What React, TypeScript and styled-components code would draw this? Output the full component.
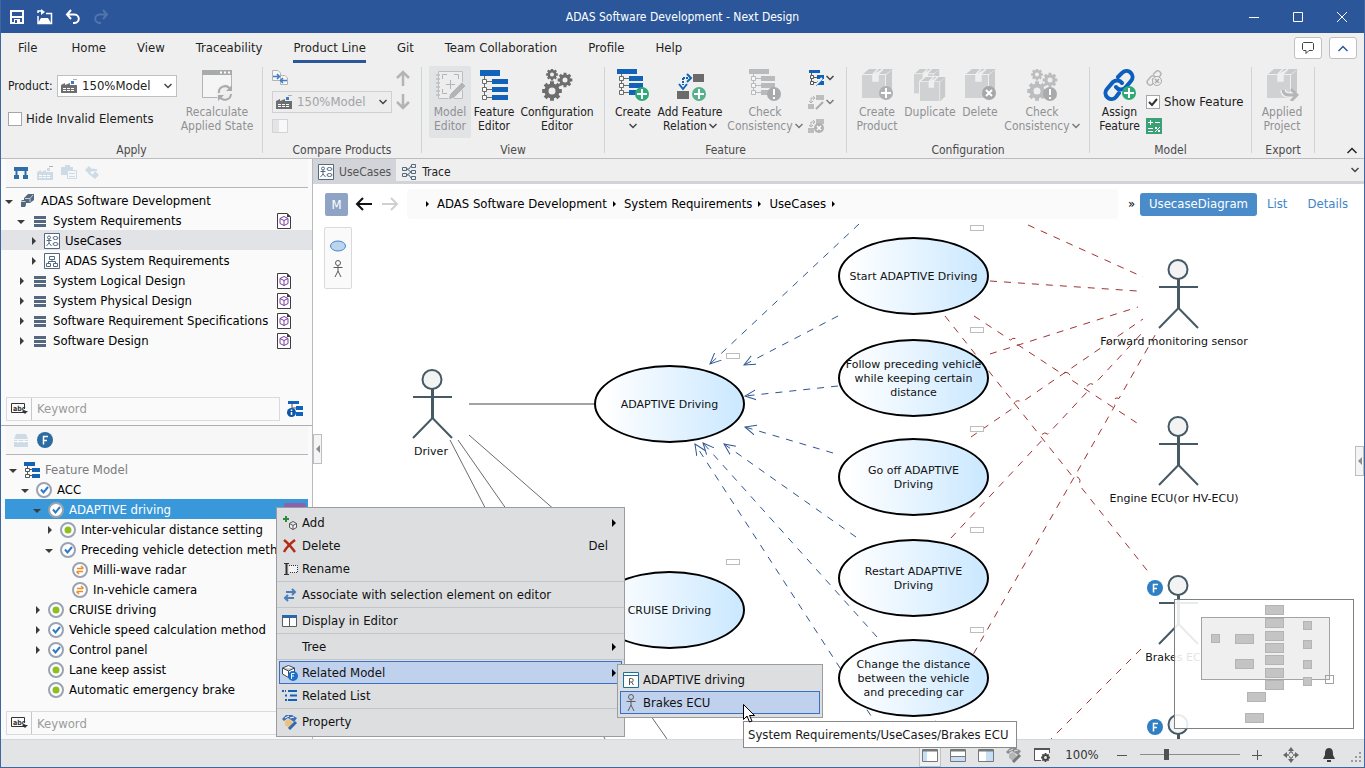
import React from "react";
import styled, { createGlobalStyle, css } from "styled-components";

const UI = `"DejaVu Sans Condensed", "DejaVu Sans", "Noto Sans", sans-serif`;
const WIDE = `"DejaVu Sans", "Noto Sans", sans-serif`;
const BLUE = "#2b579a";
const ICON_BLUE = "#1263b8";
const SLATE = "#54687f";
const GREEN = "#2fa977";

const Global = createGlobalStyle`
  *, *::before, *::after { box-sizing: border-box; }
  html, body { margin: 0; height: 100%; }
  body { font: 13px/20px ${UI}; color: #1a1a1a; background: #fff; overflow: hidden; }
  #root { height: 100%; }
  button, input, select { font: inherit; color: inherit; }
  button { background: none; border: 0; padding: 0; margin: 0; }
  svg { display: block; flex: none; }
`;

/* ---------- shell ---------- */

const Shell = styled.div`
  position: relative;
  height: 100vh;
  display: flex;
  flex-direction: column;
  border: 1px solid #41659f;
  border-top: 0;
  background: #efefef;
  overflow: hidden;
`;

const TitleBar = styled.header`
  flex: none;
  height: 33px;
  display: grid;
  grid-template-columns: 1fr auto 1fr;
  align-items: center;
  background: ${BLUE};
  color: #fff;
  font-size: 12px;
`;
const QuickTools = styled.div`
  display: flex;
  padding-left: 2px;
`;
const WindowTools = styled.div`
  display: flex;
  justify-content: flex-end;
`;
const TitleButton = styled.button<{ $w: number }>`
  width: ${(p) => p.$w}px;
  height: 32px;
  display: flex;
  align-items: center;
  justify-content: center;
`;

const TabRow = styled.nav`
  flex: none;
  height: 30px;
  display: flex;
  align-items: flex-start;
  gap: 31px;
  padding: 0 7px 0 17px;
`;
const MenuTab = styled.a<{ $active?: boolean }>`
  height: 30px;
  line-height: 30px;
  white-space: nowrap;
  color: #1f1f1f;
  text-decoration: none;
  border-bottom: 3px solid ${(p) => (p.$active ? BLUE : "transparent")};
  &:first-child { padding-right: 3px; }
`;
const TabActions = styled.div`
  display: flex;
  gap: 7px;
  margin-left: auto;
  padding-top: 4px;
`;
const SquareButton = styled.button`
  width: 28px;
  height: 22px;
  display: flex;
  align-items: center;
  justify-content: center;
  background: #fff;
  border: 1px solid #bfc0c3;
  border-radius: 3px;
`;

/* ---------- ribbon ---------- */

const Ribbon = styled.section`
  flex: none;
  height: 96px;
  display: flex;
  border-bottom: 1px solid #bcbdc1;
  font-size: 12px;
`;
const Group = styled.div<{ $w: number }>`
  flex: none;
  width: ${(p) => p.$w}px;
  padding: 3px 7px 0;
  display: flex;
  flex-direction: column;
`;
const GroupBody = styled.div<{ $gap?: number }>`
  height: 76px;
  display: flex;
  gap: ${(p) => p.$gap ?? 4}px;
`;
const GroupTitle = styled.div`
  line-height: 16px;
  text-align: center;
  color: #4b4b4b;
`;
const Divider = styled.div`
  flex: none;
  width: 1px;
  margin: 4px 0 5px;
  background: #d2d3d6;
`;
const BigButton = styled.button<{ $w: number; $off?: boolean; $pressed?: boolean }>`
  flex: none;
  width: ${(p) => p.$w}px;
  height: 72px;
  padding-top: 3px;
  display: flex;
  flex-direction: column;
  align-items: center;
  gap: 4px;
  line-height: 14px;
  white-space: nowrap;
  border-radius: 2px;
  color: ${(p) => (p.$off ? "#909194" : "#222")};
  background: ${(p) => (p.$pressed ? "#e2e3e5" : "transparent")};
`;
const LabelLine = styled.span`
  display: flex;
  align-items: center;
  justify-content: center;
  gap: 2px;
  min-height: 14px;
`;
const SmallColumn = styled.div`
  display: flex;
  flex-direction: column;
`;
const SmallButton = styled.button`
  height: 24px;
  display: flex;
  align-items: center;
  gap: 2px;
`;
const ApplyFields = styled.div`
  width: 169px;
  display: flex;
  flex-direction: column;
  gap: 10px;
  padding-top: 9px;
  font-size: 13px;
`;
const FieldLabel = styled.label`
  display: flex;
  align-items: center;
  justify-content: space-between;
  font-size: 12px;
  white-space: nowrap;
`;
const SelectBox = styled.span<{ $off?: boolean }>`
  width: 120px;
  height: 22px;
  display: grid;
  grid-template-columns: 22px 1fr 16px;
  align-items: center;
  justify-items: center;
  border: 1px solid ${(p) => (p.$off ? "#cfd0d3" : "#bfc0c3")};
  background: ${(p) => (p.$off ? "#ededee" : "#fff")};
  font-size: 13px;
  select {
    grid-row: 1;
    grid-column: 1 / 4;
    width: 118px;
    height: 20px;
    appearance: none;
    border: 0;
    padding: 0 0 0 24px;
    background: transparent;
    color: ${(p) => (p.$off ? "#a2a3a6" : "#222")};
    opacity: 1;
  }
  svg { grid-row: 1; pointer-events: none; }
  svg:first-of-type { grid-column: 1; }
  svg:last-of-type { grid-column: 3; }
`;
const CheckLabel = styled.label`
  height: 24px;
  display: flex;
  align-items: center;
  gap: 4px;
  font-size: 13px;
  white-space: nowrap;
  input {
    appearance: none;
    flex: none;
    width: 14px;
    height: 14px;
    margin: 0;
    border: 1px solid #a5a6aa;
    background: #fff;
  }
  input:checked {
    background: #fff url("data:image/svg+xml,%3Csvg xmlns='http://www.w3.org/2000/svg' viewBox='0 0 12 12'%3E%3Cpath d='M2 6l3 3 5-6' fill='none' stroke='%23333' stroke-width='2'/%3E%3C/svg%3E") center / 12px no-repeat;
  }
`;
const CompareBody = styled.div`
  display: grid;
  grid-template-columns: 120px 20px;
  grid-template-rows: 24px 24px 24px;
  align-items: center;
  column-gap: 3px;
  padding-left: 2px;
`;
const RibbonToggle = styled.button`
  align-self: flex-end;
  margin: 0 7px 2px auto;
  height: 12px;
  display: flex;
  align-items: center;
`;

/* ---------- main area ---------- */

const Main = styled.main`
  flex: 1;
  min-height: 0;
  display: flex;
`;
const Side = styled.aside`
  flex: none;
  width: 312px;
  display: flex;
  flex-direction: column;
  background: #fafafa;
  border-right: 1px solid #b9bac0;
  white-space: nowrap;
  color: #000;
`;
const TopPane = styled.section`
  flex: 0 0 46%;
  display: flex;
  flex-direction: column;
  border-bottom: 1px solid #adaeb0;
`;
const BottomPane = styled.section`
  flex: 1;
  min-height: 0;
  display: flex;
  flex-direction: column;
`;
const PaneTools = styled.div`
  flex: none;
  height: 29px;
  margin: 0 4px 0 5px;
  display: flex;
  align-items: center;
  gap: 8px;
  padding: 0 8px;
  border-bottom: 1px solid #b5b6b8;
  background: #f7f7f7;
`;
const Tree = styled.ul<{ $inset?: boolean }>`
  flex: 1;
  min-height: 0;
  overflow: hidden;
  list-style: none;
  margin: ${(p) => (p.$inset ? "4px 4px 0" : "2px 0 0")};
  padding: 0;
`;
const TreeRow = styled.li<{ $depth: number; $tone?: "grey" | "blue"; $muted?: boolean }>`
  height: 20px;
  display: flex;
  align-items: center;
  padding: 2px 21px 0 ${(p) => 2 + p.$depth * 12}px;
  color: ${(p) => (p.$muted ? "#7b7c7e" : "#000")};
  ${(p) => p.$tone === "grey" && css`background: #e2e3e7;`}
  ${(p) => p.$tone === "blue" && css`background: #3998d9; color: #fff; padding-right: 0;`}
`;
const CaretCell = styled.span`
  flex: none;
  width: 12px;
  margin-right: 5px;
  display: flex;
  justify-content: center;
`;
const IconCell = styled.span`
  flex: none;
  width: 16px;
  margin-right: 5px;
  display: flex;
  justify-content: center;
`;
const RowBadge = styled.span`
  margin-left: auto;
`;
const PurpleBadge = styled.span`
  width: 22px;
  height: 14px;
  margin: 0 2px 0 auto;
  border-radius: 2px;
  background: #8d62ab;
`;
const SearchRow = styled.div`
  flex: none;
  display: flex;
  align-items: center;
  gap: 7px;
  padding: 0 9px 4px 5px;
`;
const SearchBox = styled.label`
  flex: 1;
  height: 24px;
  display: flex;
  align-items: center;
  border: 1px solid #d9dadb;
  span {
    width: 25px;
    height: 22px;
    display: flex;
    align-items: center;
    justify-content: center;
    border-right: 1px solid #c4c9cf;
  }
  input {
    flex: 1;
    min-width: 0;
    height: 22px;
    border: 0;
    padding: 0 5px;
    background: transparent;
  }
  input::placeholder { color: #9b9b9b; opacity: 1; }
`;

/* ---------- editor ---------- */

const Editor = styled.section`
  flex: 1;
  min-width: 0;
  display: flex;
  flex-direction: column;
  background: #fff;
`;
const DocTabs = styled.div`
  flex: none;
  height: 25px;
  display: flex;
  background: #efefef;
  border-bottom: 3px solid #d3d4d9;
  font-size: 12px;
`;
const DocTab = styled.button<{ $active?: boolean }>`
  height: 25px;
  display: flex;
  align-items: center;
  gap: 5px;
  padding: 0 5px;
  background: ${(p) => (p.$active ? "#d3d4d9" : "transparent")};
  color: ${(p) => (p.$active ? "#555" : "#222")};
`;
const DocMenu = styled.button`
  margin: 0 5px 0 auto;
  display: flex;
  align-items: center;
`;
const PathRow = styled.div`
  flex: none;
  height: 40px;
  display: flex;
  align-items: center;
  padding: 0 6px 0 12px;
`;
const ModelChip = styled.span`
  width: 23px;
  height: 23px;
  line-height: 23px;
  margin-right: 7px;
  text-align: center;
  border-radius: 2px;
  color: #fff;
  background: #8fa3c4;
`;
const NavButton = styled.button`
  width: 26px;
  height: 24px;
  display: flex;
  align-items: center;
`;
const Crumbs = styled.ol`
  flex: 1;
  height: 30px;
  margin: 0 10px 0 0;
  padding: 0 0 0 13px;
  display: flex;
  align-items: center;
  list-style: none;
  border-radius: 4px;
  background: #fafafa;
  white-space: nowrap;
  li { display: flex; align-items: center; }
  svg { margin: 0 7px 0 6px; }
  a { color: #000; text-decoration: none; }
`;
const More = styled.button`
  width: 12px;
  text-align: left;
  color: #000;
`;
const ViewTab = styled.button<{ $active?: boolean }>`
  height: 23px;
  padding: 0 ${(p) => (p.$active ? 9 : 10)}px;
  border-radius: 3px;
  background: ${(p) => (p.$active ? "#4a8cca" : "transparent")};
  color: ${(p) => (p.$active ? "#fff" : "#3f84c8")};
`;

const Canvas = styled.div`
  position: relative;
  flex: 1;
  min-height: 0;
  overflow: hidden;
`;
const EdgeLayer = styled.svg`
  position: absolute;
  inset: 0;
  width: 100%;
  height: 100%;
`;
const UseCaseNode = styled.div`
  position: absolute;
  width: 151px;
  height: 78px;
  padding-top: 2px;
  display: flex;
  align-items: center;
  justify-content: center;
  text-align: center;
  white-space: pre;
  border: 2px solid #000;
  border-radius: 50%;
  background: linear-gradient(90deg, #fff 5%, #cde9ff 95%);
  font: 11px/14px ${WIDE};
  color: #111;
`;
const NodeTab = styled.div`
  position: absolute;
  width: 14px;
  height: 6px;
  border: 1px solid #bdbdbd;
  background: #fff;
`;
const ActorNode = styled.div`
  position: absolute;
  width: 160px;
  display: flex;
  flex-direction: column;
  align-items: center;
  font: 11px/14px ${WIDE};
  color: #111;
`;
const ActorLabel = styled.span<{ $long?: boolean }>`
  padding: 1px ${(p) => (p.$long ? 8 : 2)}px 0 0;
`;
const FeatureMark = styled.span`
  position: absolute;
  left: 49px;
  top: 6px;
`;
const Palette = styled.div`
  position: absolute;
  left: 11px;
  top: 3px;
  width: 28px;
  height: 62px;
  display: flex;
  flex-direction: column;
  align-items: center;
  gap: 4px;
  padding-top: 8px;
  border: 1px solid #d9dadc;
  border-radius: 2px;
  background: #fafafa;
`;
const PaneHandle = styled.button<{ $right?: boolean }>`
  position: absolute;
  top: ${(p) => (p.$right ? 222 : 210)}px;
  ${(p) => (p.$right ? "right: 0;" : "left: 0;")}
  width: 9px;
  height: 30px;
  display: flex;
  align-items: center;
  justify-content: center;
  border: 1px solid #bcbdc1;
  background: #f5f5f5;
`;
const MiniMap = styled.div`
  position: absolute;
  right: 10px;
  bottom: 10px;
  width: 180px;
  height: 130px;
  border: 1px solid #808080;
  background: rgba(255, 255, 255, 0.88);
`;

/* ---------- overlays ---------- */

const Menu = styled.div<{ $x: number; $y: number; $w: number }>`
  position: absolute;
  left: ${(p) => p.$x - 1}px;
  top: ${(p) => p.$y}px;
  width: ${(p) => p.$w}px;
  padding: 3px 2px;
  border: 1px solid #9b9c9e;
  background: #dddee0;
  color: #111;
`;
const MenuItem = styled.button<{ $hot?: boolean }>`
  width: 100%;
  height: 23px;
  display: flex;
  align-items: center;
  gap: 4px;
  padding: 0 5px 0 2px;
  text-align: left;
  white-space: nowrap;
  border: 1px solid ${(p) => (p.$hot ? "#3a6fc4" : "transparent")};
  background: ${(p) => (p.$hot ? "#c0d1ee" : "transparent")};
`;
const MenuIcon = styled.span`
  width: 16px;
  display: flex;
  justify-content: center;
`;
const MenuEnd = styled.span<{ $key?: boolean }>`
  margin-left: auto;
  padding-right: ${(p) => (p.$key ? 8 : 0)}px;
`;
const MenuRule = styled.div`
  height: 1px;
  margin: 1px -2px;
  background: #c4c5c8;
`;
const Tip = styled.div`
  position: absolute;
  left: 742px;
  top: 721px;
  height: 27px;
  padding: 0 8px 0 4px;
  line-height: 25px;
  border: 1px solid #8a8a8a;
  background: #fff;
  white-space: nowrap;
`;
const Pointer = styled.svg`
  position: absolute;
  left: 742px;
  top: 704px;
`;

/* ---------- status bar ---------- */

const StatusBar = styled.footer`
  flex: none;
  height: 28px;
  display: flex;
  align-items: center;
  justify-content: flex-end;
  padding: 2px 2px 0 0;
  border-top: 1px solid #d5d6d8;
  background: #e3e4e6;
  color: #333;
`;
const StatusButton = styled.button<{ $w?: number; $on?: boolean }>`
  width: ${(p) => p.$w ?? 28}px;
  height: 25px;
  display: flex;
  align-items: center;
  justify-content: center;
  ${(p) =>
    p.$on &&
    css`
      width: 22px;
      margin: 0 3px;
      border: 1px solid #c0c1c3;
      background: #eff0f1;
    `}
`;
const GripCell = styled.span`
  padding: 4px 0 0 4px;
`;
const ZoomValue = styled.span`
  width: 52px;
  text-align: center;
`;
const ZoomRange = styled.input`
  appearance: none;
  width: 100px;
  height: 12px;
  margin: 0 4px;
  background: linear-gradient(#8b8c8e, #8b8c8e) center / 100% 1px no-repeat;
  &::-webkit-slider-thumb {
    appearance: none;
    width: 5px;
    height: 11px;
    background: #505153;
  }
`;

/* ---------- icons ---------- */

type IcoProps = { w?: number; h?: number; children: React.ReactNode };
const Ico = ({ w = 16, h = w, children }: IcoProps) => (
  <svg width={w} height={h} viewBox={`0 0 ${w} ${h}`} fill="none" aria-hidden="true">
    {children}
  </svg>
);

const gearPath = (cx: number, cy: number, r: number, hole: number) => {
  const n = 8;
  const pts: string[] = [];
  for (let i = 0; i < n; i++) {
    const a = (i * 2 * Math.PI) / n;
    const steps: [number, number][] = [
      [-0.26, r * 0.76],
      [-0.2, r],
      [0.2, r],
      [0.26, r * 0.76],
    ];
    steps.forEach(([d, q]) => pts.push(`${(cx + q * Math.cos(a + d)).toFixed(2)} ${(cy + q * Math.sin(a + d)).toFixed(2)}`));
  }
  return `M${pts.join("L")}ZM${cx - hole} ${cy}a${hole} ${hole} 0 1 0 ${hole * 2} 0a${hole} ${hole} 0 1 0 ${-hole * 2} 0Z`;
};
const Gear = ({ x, y, r, hole, c }: { x: number; y: number; r: number; hole: number; c: string }) => (
  <path d={gearPath(x, y, r, hole)} fill={c} fillRule="evenodd" />
);

const Mark = ({ x, y, r = 7, kind, c }: { x: number; y: number; r?: number; kind: "plus" | "cross" | "bang"; c: string }) => (
  <g transform={`translate(${x} ${y})`}>
    <circle r={r} fill={c} />
    {kind === "plus" && <path d="M-5 0H5M0-5V5" stroke="#fff" strokeWidth="2" />}
    {kind === "cross" && <path d="M-3-3L3 3M3-3L-3 3" stroke="#fff" strokeWidth="2" />}
    {kind === "bang" && <path d="M0-5V1M0 3V5" stroke="#fff" strokeWidth="2" />}
  </g>
);

const FeatureTree32 = () => (
  <Ico w={32}>
    <g transform="translate(2 1)">
      <path d="M0 0H20V6H0ZM12 9H28V14H12ZM12 17H28V22H12ZM12 25H28V30H12Z" fill={ICON_BLUE} />
      <path d="M4.500 6V9.500M4.500 13.500V17.500M4.500 21.500V25.500M7 11.500H12M7 19.500H12M7 27.500H12" stroke="#6a6a6a" />
      <path d="M2.500 9.500H6.500V13.500H2.500ZM2.500 17.500H6.500V21.500H2.500ZM2.500 25.500H6.500V29.500H2.500Z" stroke="#6a6a6a" fill="#fff" />
    </g>
  </Ico>
);
const MarkedTree = ({ c, line, children }: { c: string; line: string; children: React.ReactNode }) => (
  <Ico w={34} h={32}>
    <path d="M1 0H21V5H1ZM13 7H27V12H13ZM13 14H27V19H13ZM13 21H20V26H13Z" fill={c} />
    <path d="M5.500 5V7M5.500 12V14M5.500 19V21M8 9.500H13M8 16.500H13M8 23.500H13" stroke={line} />
    <path d="M3.500 7.500H7.500V11.500H3.500ZM3.500 14.500H7.500V18.500H3.500ZM3.500 21.500H7.500V25.500H3.500Z" stroke={line} fill="#f6f6f6" />
    {children}
  </Ico>
);
const CreateFeature = () => (
  <MarkedTree c={ICON_BLUE} line="#6a6a6a"><Mark x={26} y={25} kind="plus" c={GREEN} /></MarkedTree>
);
const CheckFeature = () => (
  <MarkedTree c="#b9babb" line="#b9babb"><Mark x={26} y={25} kind="bang" c="#a9aaab" /></MarkedTree>
);
const RelationIcon = () => (
  <Ico w={34} h={32}>
    <path d="M20 5H31V13H20ZM4 22H16V30H4Z" fill="#6b6b6b" />
    <path d="M10 9V16M10 9H15" stroke={ICON_BLUE} strokeWidth="2" strokeDasharray="2 1" />
    <path d="M14 5L18 9L14 13M6 15L10 20L14 15" stroke={ICON_BLUE} strokeWidth="2" />
    <Mark x={26} y={25} kind="plus" c="#55b08c" />
  </Ico>
);
const Gears = ({ c = "#6d6d6d", bang }: { c?: string; bang?: boolean }) => (
  <Ico w={34} h={32}>
    <Gear x={12} y={5.500} r={6} hole={2} c={c} />
    <Gear x={25} y={11} r={7.500} hole={2.500} c={c} />
    <Gear x={12} y={22} r={10} hole={3.500} c={c} />
    {bang && <Mark x={25} y={25} kind="bang" c="#a9aaab" />}
  </Ico>
);
const RecalcIcon = () => (
  <Ico w={32}>
    <path d="M1.500 2.500H30.500V28.500H1.500Z" fill="#f5f5f5" stroke="#b3b4b6" />
    <path d="M1 1H31V6H1Z" fill="#a9aaac" />
    <path d="M19 3.500H21M23 3.500H25M27 3.500H29" stroke="#fff" strokeWidth="2" />
    <circle cx="24" cy="24" r="9" fill="#efefef" />
    <path d="M18 24A6 6 0 0 1 29 20M30 25A6 6 0 0 1 19 28" stroke="#a9aaac" strokeWidth="2" />
    <path d="M31 16V22H25ZM17 32V26H23Z" fill="#a9aaac" />
  </Ico>
);
const ModelEditorIcon = () => (
  <Ico w={32}>
    <path d="M4.500 2.500H28.500V29.500H4.500Z" stroke="#bdbec0" fill="#ededee" />
    <path d="M2 6H6M2 10H6M2 14H6M2 18H6M2 22H6M2 26H6" stroke="#bdbec0" strokeWidth="1.500" />
    <path d="M8.500 10V5.500H13M20 5.500H24.500V10M8.500 20V24.500H13M16.500 11V20M12 15.500H21" stroke="#b3b4b6" strokeWidth="1" />
    <path d="M14 31L16 25L28 13L32 17L20 29Z" fill="#b3b4b6" stroke="#e2e3e5" />
  </Ico>
);
const BoxArt = ({ c = "#d0d1d2", top = "#c9cacb" }: { c?: string; top?: string }) => (
  <g>
    <path d="M0 6H23V29H0Z" fill={c} />
    <path d="M1 5L7 0H31L24 5Z" fill={top} />
    <path d="M24 6L30 1V23L24 29Z" fill={top} />
    <path d="M11 5L16 0M11 5V12H16V5L21 0" stroke="#efefef" strokeWidth="1.500" fill="#efefef" />
  </g>
);
const BoxIcon = ({ kind }: { kind?: "plus" | "cross" | "export" }) => (
  <Ico w={34} h={32}>
    <g transform="translate(2 0)"><BoxArt /></g>
    {kind === "plus" && <Mark x={26} y={24} kind="plus" c="#b0b1b2" />}
    {kind === "cross" && <Mark x={26} y={24} kind="cross" c="#a6a7a8" />}
    {kind === "export" && (
      <g>
        <path d="M18 21C19 27 23 26 30 26" stroke="#efefef" strokeWidth="6" />
        <path d="M18 21C19 27 23 26 30 26M26 20L32 26L26 32" stroke="#b5b6b7" strokeWidth="3" />
      </g>
    )}
  </Ico>
);
const DuplicateIcon = () => (
  <Ico w={34} h={32}>
    <g transform="translate(1 0) scale(.84)"><BoxArt /></g>
    <path d="M6 12L12 7H34V32H6Z" fill="#efefef" />
    <g transform="translate(7 8) scale(.84)"><BoxArt /></g>
  </Ico>
);
const ChainArt = ({ c, sw }: { c: string; sw: number }) => (
  <g stroke={c} strokeWidth={sw} strokeLinecap="round">
    <path d="M13 18A6 6 0 0 0 22 19L28 12A6 6 0 0 0 19 4L15 8" />
    <path d="M19 14A6 6 0 0 0 10 13L4 20A6 6 0 0 0 13 28L16 24" />
  </g>
);
const AssignIcon = () => (
  <Ico w={34} h={32}>
    <ChainArt c="#0d5fbd" sw={4} />
    <Mark x={26} y={24} kind="plus" c={GREEN} />
  </Ico>
);
const UnlinkIcon = () => (
  <Ico>
    <g transform="scale(.5)"><ChainArt c="#b3b4b6" sw={3} /></g>
    <circle cx="11" cy="11" r="4.500" fill="#efefef" stroke="#a9aaac" />
    <path d="M9 9L13 13M13 9L9 13" stroke="#a9aaac" strokeWidth="1.500" />
  </Ico>
);
const CalcIcon = () => (
  <Ico>
    <path d="M0 0H16V16H0Z" fill="#3aa177" />
    <path d="M2 4.500H7M4.500 2V7M9 4.500H14M2 10.500H7M2 13.500H7M9 14L14 9" stroke="#fff" />
    <path d="M9 9H11V11H9ZM12 12H14V14H12Z" fill="#fff" />
  </Ico>
);
const SmallTree = () => (
  <Ico>
    <path d="M1 0H12V3H1ZM9 5H16V9H9ZM9 11H16V15H9Z" fill={ICON_BLUE} />
    <path d="M3.500 3V6M3.500 9V11M6 7.500H9M6 12.500H9" stroke="#555" />
    <path d="M2.500 5.500H5.500V8.500H2.500ZM2.500 11.500H5.500V14.500H2.500Z" stroke="#555" fill="#fff" />
    <path d="M7 16L14 8" stroke="#efefef" strokeWidth="2" />
    <path d="M8 16L15 9" stroke="#5a9bdc" />
  </Ico>
);
const SmallRelation = ({ cross }: { cross?: boolean }) => (
  <Ico>
    <path d="M8 1H16V6H8ZM0 10H6V15H0Z" fill="#bcbdbf" />
    <path d="M3 9V4H7M1 7L3 9L5 7M5 2L7 4L5 6" stroke="#b0b1b3" />
    {cross ? (
      <g>
        <circle cx="11" cy="10" r="5" fill="#b0b1b3" />
        <path d="M9 8L13 12M13 8L9 12" stroke="#fff" strokeWidth="1.500" />
      </g>
    ) : (
      <path d="M8 15L15 8" stroke="#a9aaac" strokeWidth="2" />
    )}
  </Ico>
);
const Factory = ({ c = "#6d6e70", dot = "#3d7dc4" }: { c?: string; dot?: string }) => (
  <Ico>
    <path d="M0 15V7L4 5V7L9 5V7H16V15Z" fill={c} />
    <path d="M10 3H13V6H10Z" fill={dot} />
    <path d="M12 1.500H16" stroke="#b0b1b3" />
    <path d="M2 10.500H14M2 12.500H14" stroke="#fff" strokeWidth="1" strokeDasharray="3 1" />
  </Ico>
);
const Chevron = ({ up, c = "#444", w = 8, sw = 1.500 }: { up?: boolean; c?: string; w?: number; sw?: number }) => (
  <Ico w={w} h={w / 2 + 2}>
    <path d={up ? `M.5 ${w / 2 + 1}L${w / 2} 1.500L${w - 0.5} ${w / 2 + 1}` : `M.5 1L${w / 2} ${w / 2 + 0.5}L${w - 0.5} 1`} stroke={c} strokeWidth={sw} />
  </Ico>
);
const ArrowV = ({ up }: { up?: boolean }) => (
  <Ico w={16}>
    <path d={up ? "M8 16V2M2 8L8 2L14 8" : "M8 0V14M2 8L8 14L14 8"} stroke="#b3b4b6" strokeWidth="2.500" />
  </Ico>
);
const CompareIcon = () => (
  <Ico>
    <path d="M.5.5H6L8.500 3V10.500H.5ZM8.500 5.500H13L15.500 8V14.500H8.500Z" fill="#f8f8f8" stroke="#b3b4b6" />
    <path d="M1 6.500H7M5 4L7.500 6.500L5 9M15 10.500H9M11 8L8.500 10.500L11 13" stroke="#3d7dc4" strokeWidth="1.500" />
  </Ico>
);
const SplitIcon = () => (
  <Ico>
    <path d="M.5 1.500H15.500V14.500H.5Z" fill="#f8f8f8" stroke="#d2d3d5" />
    <path d="M1 2H7V14H1Z" fill="#e3e4e6" />
  </Ico>
);
const NavArrow = ({ back }: { back?: boolean }) => (
  <Ico w={18} h={14}>
    <path d={back ? "M17 7H3M8 1L2 7L8 13" : "M1 7H15M10 1L16 7L10 13"} stroke={back ? "#111" : "#d0d0d0"} strokeWidth="2" />
  </Ico>
);
const RightTri = () => (
  <Ico w={4} h={8}><path d="M0 0L4 4L0 8Z" fill="#000" /></Ico>
);
const Crumb = () => (
  <Ico w={4} h={6}><path d="M0 0L3 3L0 6Z" fill="#000" /></Ico>
);
const Caret = ({ open }: { open?: boolean }) => (
  <Ico w={8}><path d={open ? "M0 3H8L4 7Z" : "M3 0L7 4L3 8Z"} fill="#3c3c3c" /></Ico>
);
const UseCaseIcon = () => (
  <Ico>
    <path d="M.5.5H15.500V15.500H.5Z" fill="#fff" stroke={SLATE} />
    <circle cx="5" cy="4.500" r="1.500" stroke={SLATE} />
    <path d="M5 6V10M2.500 7.500H7.500M5 10L2.500 13M5 10L7.500 13" stroke={SLATE} />
    <ellipse cx="11.500" cy="5" rx="2.500" ry="1.500" stroke={SLATE} />
    <ellipse cx="11.500" cy="11" rx="2.500" ry="1.500" stroke={SLATE} />
  </Ico>
);
const HierIcon = () => (
  <Ico>
    <path d="M.5.5H15.500V15.500H.5Z" fill="#fff" stroke={SLATE} />
    <path d="M5.500 3.500H10.500V6.500H5.500ZM2.500 10.500H6.500V13.500H2.500ZM9.500 10.500H13.500V13.500H9.500ZM8 7V8.500M4.500 10V8.500H11.500V10" stroke={SLATE} />
  </Ico>
);
const ListIcon = () => (
  <Ico w={12}><path d="M0 1H12V4H0ZM0 5H12V8H0ZM0 9H12V12H0Z" fill={SLATE} /></Ico>
);
const ProjectIcon = () => (
  <Ico>
    <path d="M4 5L8 1H14V7L10 10H4Z" fill={SLATE} />
    <path d="M5 5.500H10V9M10 5.500L13 2" stroke="#c9d0d8" />
    <path d="M1 8L2 7H6V12L5 14H1Z" fill={SLATE} />
    <path d="M1 8.500H5.500" stroke="#c9d0d8" />
  </Ico>
);
const PackageIcon = () => (
  <Ico w={14} h={16}>
    <path d="M.5.5H10L13.500 4V15.500H.5Z" fill="#fff" stroke="#3c3c3c" />
    <path d="M10 0V4H14Z" fill="#3c3c3c" />
    <path d="M7 3.500L11 5.500V10.500L7 12.500L3 10.500V5.500ZM3 5.500L7 7.500L11 5.500M7 7.500V12.500" stroke="#7a3fa0" />
  </Ico>
);
const Ring = ({ children }: { children: React.ReactNode }) => (
  <Ico><circle cx="8" cy="8" r="7" fill="#fff" stroke="#9aa3b2" strokeWidth="2" />{children}</Ico>
);
const CheckRing = () => (
  <Ring><path d="M5 7.500L7.500 10.500L12 5" stroke="#2a7ac4" strokeWidth="2" /></Ring>
);
const DotRing = () => (
  <Ring><circle cx="8" cy="8" r="3.500" fill="#8fbf1f" /></Ring>
);
const SwapRing = () => (
  <Ring><path d="M5 6.500H11M9 4L11.500 6.500M11 9.500H5M7 12L4.500 9.500" stroke="#f08a24" strokeWidth="1.500" /></Ring>
);
const FeatureTree16 = () => (
  <Ico>
    <path d="M0 0H11V4H0ZM8 6H16V10H8ZM8 12H16V16H8Z" fill={ICON_BLUE} />
    <path d="M3.500 4V6M3.500 9V12M5 7.500H8M5 13.500H8" stroke="#555" />
    <path d="M1.500 6.500H5.500V9.500H1.500ZM1.500 12.500H5.500V15.500H1.500Z" stroke="#555" fill="#fff" />
  </Ico>
);
const InfoTree = () => (
  <Ico>
    <path d="M1 0H12V3H1ZM9 5H16V9H9ZM9 11H16V15H9Z" fill={ICON_BLUE} />
    <path d="M5 3V7M5 7H9" stroke="#555" />
    <circle cx="4.500" cy="11.500" r="4.500" fill="#0b56a8" />
    <path d="M4.500 8.500V10M4.500 11V14" stroke="#fff" strokeWidth="1.500" />
  </Ico>
);
const AbcIcon = () => (
  <svg width="17" height="12" viewBox="0 0 17 12" fill="none" aria-hidden="true">
    <path d="M13 9.500H.5V.5H13.500V6" stroke="#333" />
    <text x="2" y="8" fontSize="7" fontWeight="700" fill="#333" fontFamily="DejaVu Sans Condensed">abc</text>
    <path d="M11 8H17L14 11Z" fill="#333" />
  </svg>
);
const FBadge = ({ c = "#2b6ca3" }: { c?: string }) => (
  <Ico>
    <circle cx="8" cy="8" r="8" fill={c} />
    <path d="M6.500 12.500V4.500H11M6.500 8.500H10" stroke="#fff" strokeWidth="1.500" />
  </Ico>
);
const HierTool = () => (
  <Ico w={15} h={14}>
    <path d="M0 1H14V5H0ZM0 9H5V13H0ZM9 9H14V13H9Z" fill="#2f6fa8" />
    <path d="M2.500 5V9M11.500 5V9" stroke="#2f6fa8" strokeWidth="2" />
  </Ico>
);
const CopyTool = () => (
  <Ico>
    <path d="M0 2H4V0H9V2H12V10H0Z" fill="#cddbe7" />
    <path d="M6.500 5.500H15.500V13.500H6.500Z" fill="#f7f7f7" stroke="#cddbe7" />
    <path d="M8 8.500H14M8 11.500H14" stroke="#cddbe7" />
  </Ico>
);
const ShareTool = () => (
  <Ico>
    <path d="M0 5L4 1L8 5L4 9ZM8 3L10 5L8 7M10 6L14 10L10 14L7 11Z" fill="#cddbe7" />
    <path d="M4 8L9 12M7 5H12" stroke="#cddbe7" strokeWidth="2" />
  </Ico>
);
const CaseTool = () => (
  <Ico w={15} h={14}>
    <path d="M2 1H12L14 6H0ZM0 7H14V14H0Z" fill="#cddbe7" />
    <path d="M0 8.500H14M4 7V10M10 7V10" stroke="#fff" />
  </Ico>
);
const TraceIcon = () => (
  <Ico>
    <path d="M1.500 3.500H5.500V6.500H1.500ZM1.500 9.500H5.500V12.500H1.500ZM10.500.5H14.500V3.500H10.500ZM10.500 6.500H14.500V9.500H10.500ZM10.500 12.500H14.500V15.500H10.500ZM6 5H8L10 2M6 5L10 8M6 11H8L10 14M6 11L10 8" stroke={SLATE} />
  </Ico>
);
const StickMan = () => (
  <Ico w={12} h={18}>
    <circle cx="6" cy="3" r="2.500" stroke="#5a5a5a" />
    <path d="M6 6V11M1.500 7.500H10.500M6 11L3 17M6 11L9 17" stroke="#5a5a5a" />
  </Ico>
);
const AddIcon = () => (
  <Ico>
    <path d="M4 1V7M1 4H7" stroke="#2c8a3a" strokeWidth="2" />
    <path d="M11 6.500L14.500 8.500V12.500L11 14.500L7.500 12.500V8.500ZM7.500 8.500L11 10.500L14.500 8.500M11 10.500V14.500" stroke="#555" fill="#f3f3f3" />
  </Ico>
);
const DeleteIcon = () => (
  <Ico><path d="M2 2C6 5 10 10 13 14M13 2C9 5 4 10 2 14" stroke="#b32c14" strokeWidth="2.500" /></Ico>
);
const RenameIcon = () => (
  <Ico w={15} h={12}>
    <path d="M6 2.500H14.500V9.500H6" stroke="#333" strokeDasharray="1 1" fill="#f3f3f3" />
    <path d="M1 .5H6M1 11.500H6" stroke="#333" strokeDasharray="2 1" />
    <path d="M3.500 0V12" stroke="#333" strokeWidth="2" />
  </Ico>
);
const SwapIcon = () => (
  <Ico><path d="M4 5H13M10 2L13 5L10 8M12 11H3M6 8L3 11L6 14" stroke="#4a7fb8" strokeWidth="2" /></Ico>
);
const PanesIcon = () => (
  <Ico>
    <path d="M.5 2.500H14.500V13.500H.5ZM7.500 5V13" fill="#fff" stroke="#5c5c5c" />
    <path d="M0 2H15V5H0Z" fill="#2b66a8" />
  </Ico>
);
const RelatedIcon = () => (
  <Ico>
    <path d="M6.500.5L12.500 3V9L6.500 12.500L.5 9V3ZM.5 3L6.500 6L12.500 3M6.500 6V12.500" fill="#fff" stroke="#444" />
    <circle cx="11" cy="11" r="5" fill="#1a6fc8" />
    <path d="M9.500 14V8.500H12.500M9.500 11H12" stroke="#fff" />
  </Ico>
);
const RelListIcon = () => (
  <Ico>
    <path d="M6 3H15M8 7.500H15M6 12H15" stroke={ICON_BLUE} strokeWidth="2" />
    <path d="M0 3H4M3 7.500H6M3 12H5" stroke={ICON_BLUE} strokeWidth="2" strokeDasharray="2 1" />
  </Ico>
);
const PropertyIcon = ({ grey }: { grey?: boolean }) => (
  <Ico>
    <path d="M0 5L4 1L10 1L15 4L12 8L9 6L6 4L2 7Z" fill={grey ? "#8c8d8f" : "#3e6fb5"} />
    <path d="M3 4L7 2M8 4L12 3" stroke={grey ? "#e3e4e6" : "#fff"} />
    <path d="M3 7L7 5L11 9L7 14L3 11Z" fill={grey ? "#b5b6b8" : "#eac27a"} />
    <path d="M7 15L14 8" stroke={grey ? "#77787a" : "#2f69b2"} strokeWidth="3" />
  </Ico>
);
const RIcon = () => (
  <Ico w={16}>
    <path d="M.5.5H15.500V15.500H.5Z" fill="#fff" stroke="#1f6f9a" />
    <path d="M1 3.500H15" stroke="#1f6f9a" />
    <path d="M6.500 13V6.500H8.500A1.500 1.500 0 0 1 8.500 10H6.500M8.500 10L10.500 13" stroke="#555" />
  </Ico>
);
const LayoutIcon = ({ part }: { part: "left" | "bottom" | "right" }) => (
  <Ico w={16} h={14}>
    <path d="M.5 1.500H15.500V13.500H.5Z" fill="#fff" />
    {part === "left" && <path d="M1 2H5V13H1Z" fill="#c6dff5" />}
    {part === "bottom" && <path d="M1 9H15V13H1Z" fill="#c6dff5" />}
    {part === "right" && <path d="M8 2H15V13H8Z" fill="#c6dff5" />}
    <path d="M.5 1.500H15.500V13.500H.5Z" stroke="#77787a" />
    <path d="M1 2.500H15" stroke="#77787a" strokeWidth="2" />
    {part === "bottom" && <path d="M1 8.500H15" stroke="#77787a" />}
  </Ico>
);
const SettingsPane = () => (
  <Ico w={17} h={15}>
    <path d="M7 13.500H.5V1.500H15.500V6" stroke="#555" fill="#fff" />
    <path d="M0 2H16" stroke="#555" strokeWidth="2" />
    <Gear x={11.500} y={10.500} r={4.500} hole={1.500} c="#444" />
  </Ico>
);
const FitIcon = () => (
  <Ico>
    <path d="M8 0L11 4H5ZM8 16L5 12H11ZM0 8L4 5V11ZM16 8L12 11V5Z" fill="#66676a" />
    <path d="M6 6H7M9 6H10M6 10H7M9 10H10M8 4V6M8 10V12M4 8H6M10 8H12" stroke="#66676a" strokeWidth="1.500" />
  </Ico>
);
const BellIcon = () => (
  <Ico>
    <path d="M8 1C12 1 12 5 12 8L14 12H2L4 8C4 5 4 1 8 1ZM6 13H10V15H6Z" fill="#3c3c3c" />
  </Ico>
);
const GripIcon = () => (
  <Ico w={12}>
    <path d="M9 1H11V3H9ZM9 5H11V7H9ZM5 5H7V7H5ZM9 9H11V11H9ZM5 9H7V11H5ZM1 9H3V11H1Z" fill="#9b9c9f" />
  </Ico>
);
const LeftTri = () => (
  <Ico w={4} h={8}><path d="M4 0L0 4L4 8Z" fill="#8c8d8f" /></Ico>
);

/* ---------- data ---------- */

/* The diagram is scrolled, so its origin sits outside the visible canvas. */
const SCROLL = { x: 313, y: 224 };
const at = (x: number, y: number) => ({ left: x - SCROLL.x, top: y - SCROLL.y });

const useCases = [
  { x: 594, y: 365, label: "ADAPTIVE Driving" },
  { x: 594, y: 571, label: "CRUISE Driving" },
  { x: 838, y: 237, label: "Start ADAPTIVE Driving" },
  { x: 838, y: 339, label: "Follow preceding vehicle\nwhile keeping certain\ndistance" },
  { x: 838, y: 438, label: "Go off ADAPTIVE\nDriving" },
  { x: 838, y: 539, label: "Restart ADAPTIVE\nDriving" },
  { x: 838, y: 639, label: "Change the distance\nbetween the vehicle\nand preceding car" },
];
const actors = [
  { x: 432, y: 368, label: "Driver" },
  { x: 1178, y: 258, label: "Forward monitoring sensor", long: true },
  { x: 1178, y: 415, label: "Engine ECU(or HV-ECU)", long: true },
  { x: 1178, y: 574, label: "Brakes ECU", mark: true },
  { x: 1178, y: 713, label: "", mark: true },
];
const blueEdges = [
  "M859 224L710 364", "M838 316L744 365", "M838 386L745 396", "M833 453L745 427",
  "M856 537L724 444", "M877 637L703 443", "M886 739L695 444",
];
const greyEdges = ["M450 440L605 739", "M458 440L667 739", "M469 435L612 560"];

type Pt = [number, number];
const redEdges: { a: Pt; b: Pt; hops?: number[] }[] = [
  { a: [1028, 225], b: [1143, 277] },
  { a: [990, 281], b: [1137, 291] },
  { a: [990, 354], b: [1138, 307] },
  { a: [971, 437], b: [1143, 319], hops: [1018] },
  { a: [951, 538], b: [1142, 333], hops: [1045, 1091] },
  { a: [925, 739], b: [1158, 330], hops: [1117] },
  { a: [945, 316], b: [1150, 574], hops: [1076] },
  { a: [974, 316], b: [1140, 425], hops: [1014, 1066] },
  { a: [1141, 649], b: [1051, 739] },
];
/* A line that jumps in a small arc over each line it crosses. */
const hopPath = ({ a, b, hops = [] }: (typeof redEdges)[number]) => {
  const len = Math.hypot(b[0] - a[0], b[1] - a[1]);
  const ux = (b[0] - a[0]) / len;
  const uy = (b[1] - a[1]) / len;
  const arcs = hops.map((hx) => {
    const hy = a[1] + ((hx - a[0]) * uy) / ux;
    return `L${hx - ux * 4} ${hy - uy * 4}A4 4 0 0 1 ${hx + ux * 4} ${hy + uy * 4}`;
  });
  return `M${a[0]} ${a[1]}${arcs.join("")}L${b[0]} ${b[1]}`;
};

const miniBig: Pt[] = [
  [90, 5], [90, 18], [90, 31], [90, 43], [90, 55], [90, 68], [90, 80], [72, 92], [70, 113], [60, 34], [60, 59],
];
const miniSmall: Pt[] = [[36, 34], [128, 21], [128, 40], [128, 60], [128, 77]];

type Row = {
  d: number; label: string; icon: React.ReactNode; open?: boolean;
  pkg?: boolean; tone?: "grey" | "blue"; muted?: boolean; leaf?: boolean;
};
const modelRows: Row[] = [
  { d: 0, label: "ADAS Software Development", icon: <ProjectIcon />, open: true },
  { d: 1, label: "System Requirements", icon: <ListIcon />, open: true, pkg: true },
  { d: 2, label: "UseCases", icon: <UseCaseIcon />, tone: "grey" },
  { d: 2, label: "ADAS System Requirements", icon: <HierIcon /> },
  { d: 1, label: "System Logical Design", icon: <ListIcon />, pkg: true },
  { d: 1, label: "System Physical Design", icon: <ListIcon />, pkg: true },
  { d: 1, label: "Software Requirement Specifications", icon: <ListIcon />, pkg: true },
  { d: 1, label: "Software Design", icon: <ListIcon />, pkg: true },
];
const featureRows: Row[] = [
  { d: 0, label: "Feature Model", icon: <FeatureTree16 />, open: true, muted: true },
  { d: 1, label: "ACC", icon: <CheckRing />, open: true },
  { d: 2, label: "ADAPTIVE driving", icon: <CheckRing />, open: true, tone: "blue" },
  { d: 3, label: "Inter-vehicular distance setting", icon: <DotRing /> },
  { d: 3, label: "Preceding vehicle detection method", icon: <CheckRing />, open: true },
  { d: 4, label: "Milli-wave radar", icon: <SwapRing />, leaf: true },
  { d: 4, label: "In-vehicle camera", icon: <SwapRing />, leaf: true },
  { d: 2, label: "CRUISE driving", icon: <DotRing /> },
  { d: 2, label: "Vehicle speed calculation method", icon: <CheckRing /> },
  { d: 2, label: "Control panel", icon: <CheckRing /> },
  { d: 2, label: "Lane keep assist", icon: <DotRing />, leaf: true },
  { d: 2, label: "Automatic emergency brake", icon: <DotRing />, leaf: true },
];
const menuTabs = ["File", "Home", "View", "Traceability", "Product Line", "Git", "Team Collaboration", "Profile", "Help"];

type Entry = { label: string; icon?: React.ReactNode; sub?: boolean; hot?: boolean; keys?: string } | null;
const contextEntries: Entry[] = [
  { label: "Add", icon: <AddIcon />, sub: true },
  { label: "Delete", icon: <DeleteIcon />, keys: "Del" },
  { label: "Rename", icon: <RenameIcon /> },
  null,
  { label: "Associate with selection element on editor", icon: <SwapIcon /> },
  null,
  { label: "Display in Editor", icon: <PanesIcon /> },
  null,
  { label: "Tree", sub: true },
  null,
  { label: "Related Model", icon: <RelatedIcon />, sub: true, hot: true },
  { label: "Related List", icon: <RelListIcon /> },
  null,
  { label: "Property", icon: <PropertyIcon /> },
];
const relatedEntries: Entry[] = [
  { label: "ADAPTIVE driving", icon: <RIcon /> },
  { label: "Brakes ECU", icon: <StickMan />, hot: true },
];

/* ---------- pieces ---------- */

type BigProps = { w: number; icon: React.ReactNode; lines: string[]; off?: boolean; pressed?: boolean; drop?: "below" | "inline" };
const Big = ({ w, icon, lines, off, pressed, drop }: BigProps) => (
  <BigButton $w={w} $off={off} $pressed={pressed}>
    {icon}
    <span>
      {lines.map((line, i) => (
        <LabelLine key={line}>
          {line}
          {drop === "inline" && i === lines.length - 1 && <Chevron c={off ? "#77787a" : "#444"} />}
        </LabelLine>
      ))}
      {drop === "below" && <LabelLine><Chevron /></LabelLine>}
    </span>
  </BigButton>
);

const TreeList = ({ rows, inset }: { rows: Row[]; inset?: boolean }) => (
  <Tree $inset={inset}>
    {rows.map((r) => (
      <TreeRow key={r.label} $depth={r.d} $tone={r.tone} $muted={r.muted}>
        <CaretCell>{!r.leaf && <Caret open={r.open} />}</CaretCell>
        <IconCell>{r.icon}</IconCell>
        {r.label}
        {r.pkg && <RowBadge><PackageIcon /></RowBadge>}
        {r.tone === "blue" && <PurpleBadge />}
      </TreeRow>
    ))}
  </Tree>
);

const Search = () => (
  <SearchRow>
    <SearchBox>
      <span><AbcIcon /></span>
      <input type="text" placeholder="Keyword" aria-label="Keyword" />
    </SearchBox>
    <InfoTree />
  </SearchRow>
);

const PopupMenu = ({ x, y, w, entries }: { x: number; y: number; w: number; entries: Entry[] }) => (
  <Menu $x={x} $y={y} $w={w} role="menu">
    {entries.map((e, i) =>
      e ? (
        <MenuItem key={e.label} $hot={e.hot} role="menuitem">
          <MenuIcon>{e.icon}</MenuIcon>
          {e.label}
          {e.sub && <MenuEnd><RightTri /></MenuEnd>}
          {e.keys && <MenuEnd $key>{e.keys}</MenuEnd>}
        </MenuItem>
      ) : (
        <MenuRule key={i} />
      )
    )}
  </Menu>
);

const RibbonBar = () => (
  <Ribbon>
    <Group $w={261}>
      <GroupBody>
        <ApplyFields>
          <FieldLabel>
            Product:
            <SelectBox>
              <Factory />
              <select defaultValue="150%Model"><option>150%Model</option></select>
              <Chevron />
            </SelectBox>
          </FieldLabel>
          <CheckLabel><input type="checkbox" />Hide Invalid Elements</CheckLabel>
        </ApplyFields>
        <Big w={72} off icon={<RecalcIcon />} lines={["Recalculate", "Applied State"]} />
      </GroupBody>
      <GroupTitle>Apply</GroupTitle>
    </Group>
    <Divider />
    <Group $w={158}>
      <GroupBody>
        <CompareBody>
          <SmallButton aria-label="Compare"><CompareIcon /></SmallButton>
          <SmallButton aria-label="Previous"><ArrowV up /></SmallButton>
          <SelectBox $off>
            <Factory />
            <select disabled aria-label="Compared product" defaultValue="150%Model"><option>150%Model</option></select>
            <Chevron />
          </SelectBox>
          <SmallButton aria-label="Next"><ArrowV /></SmallButton>
          <SmallButton aria-label="Side by side"><SplitIcon /></SmallButton>
        </CompareBody>
      </GroupBody>
      <GroupTitle>Compare Products</GroupTitle>
    </Group>
    <Divider />
    <Group $w={182}>
      <GroupBody $gap={2}>
        <Big w={42} off pressed icon={<ModelEditorIcon />} lines={["Model", "Editor"]} />
        <Big w={42} icon={<FeatureTree32 />} lines={["Feature", "Editor"]} />
        <Big w={80} icon={<Gears />} lines={["Configuration", "Editor"]} />
      </GroupBody>
      <GroupTitle>View</GroupTitle>
    </Group>
    <Divider />
    <Group $w={241}>
      <GroupBody>
        <Big w={42} icon={<CreateFeature />} lines={["Create"]} drop="below" />
        <Big w={64} icon={<RelationIcon />} lines={["Add Feature", "Relation"]} drop="inline" />
        <Big w={78} off icon={<CheckFeature />} lines={["Check", "Consistency"]} drop="inline" />
        <SmallColumn>
          <SmallButton aria-label="Edit feature"><SmallTree /><Chevron /></SmallButton>
          <SmallButton aria-label="Edit relation"><SmallRelation /><Chevron c="#77787a" /></SmallButton>
          <SmallButton aria-label="Remove relation"><SmallRelation cross /></SmallButton>
        </SmallColumn>
      </GroupBody>
      <GroupTitle>Feature</GroupTitle>
    </Group>
    <Divider />
    <Group $w={242}>
      <GroupBody>
        <Big w={46} off icon={<BoxIcon kind="plus" />} lines={["Create", "Product"]} />
        <Big w={52} off icon={<DuplicateIcon />} lines={["Duplicate"]} />
        <Big w={40} off icon={<BoxIcon kind="cross" />} lines={["Delete"]} />
        <Big w={76} off icon={<Gears c="#bcbdbe" bang />} lines={["Check", "Consistency"]} drop="inline" />
      </GroupBody>
      <GroupTitle>Configuration</GroupTitle>
    </Group>
    <Divider />
    <Group $w={161}>
      <GroupBody>
        <Big w={45} icon={<AssignIcon />} lines={["Assign", "Feature"]} />
        <SmallColumn>
          <SmallButton aria-label="Unassign"><UnlinkIcon /></SmallButton>
          <CheckLabel><input type="checkbox" defaultChecked />Show Feature</CheckLabel>
          <SmallButton aria-label="Formula"><CalcIcon /></SmallButton>
        </SmallColumn>
      </GroupBody>
      <GroupTitle>Model</GroupTitle>
    </Group>
    <Divider />
    <Group $w={62}>
      <GroupBody>
        <Big w={46} off icon={<BoxIcon kind="export" />} lines={["Applied", "Project"]} />
      </GroupBody>
      <GroupTitle>Export</GroupTitle>
    </Group>
    <Divider />
    <RibbonToggle aria-label="Collapse ribbon"><Chevron up w={10} c="#222" /></RibbonToggle>
  </Ribbon>
);

const Diagram = () => (
  <Canvas>
    <EdgeLayer>
      <defs>
        <marker id="tip" markerUnits="userSpaceOnUse" markerWidth="14" markerHeight="14" refX="11" refY="6" orient="auto">
          <path d="M0 1L11 6L0 11" fill="none" stroke="#2f5590" />
        </marker>
      </defs>
      <g transform={`translate(${-SCROLL.x} ${-SCROLL.y})`} fill="none">
        <path d="M469 404H594" stroke="#a3a3a3" strokeWidth="2" />
        {greyEdges.map((d) => <path key={d} d={d} stroke="#6b6b6b" />)}
        {blueEdges.map((d) => <path key={d} d={d} stroke="#2f5590" strokeDasharray="7 7" markerEnd="url(#tip)" />)}
        {redEdges.map((e) => <path key={e.a.join()} d={hopPath(e)} stroke="#a03232" strokeDasharray="7 7" />)}
      </g>
    </EdgeLayer>
    {useCases.map((n) => (
      <React.Fragment key={n.label}>
        <UseCaseNode style={at(n.x, n.y)}>{n.label}</UseCaseNode>
        <NodeTab style={at(n.x + 132, n.y - 12)} />
      </React.Fragment>
    ))}
    {actors.map((n) => (
      <ActorNode key={n.label} style={at(n.x - 80, n.y)}>
        <svg width="44" height="76" viewBox="0 0 44 76" fill="none" stroke="#455a64">
          <circle cx="22" cy="11.500" r="9.500" fill="#f3f3f3" strokeWidth="2" />
          <path d="M22.500 21V51" strokeWidth="3" />
          <path d="M3 29H42M22.500 50L3 70M22.500 50L42 70" strokeWidth="2" />
        </svg>
        <ActorLabel $long={n.long}>{n.label}</ActorLabel>
        {n.mark && <FeatureMark><FBadge c="#2e7fc4" /></FeatureMark>}
      </ActorNode>
    ))}
    <Palette>
      <Ico w={18} h={20}><ellipse cx="9" cy="10" rx="7.500" ry="5" fill="#bcd5ef" stroke="#4a86c8" /></Ico>
      <StickMan />
    </Palette>
    <PaneHandle aria-label="Left pane"><LeftTri /></PaneHandle>
    <PaneHandle $right aria-label="Right pane"><LeftTri /></PaneHandle>
    <MiniMap>
      <svg width="178" height="128" viewBox="0 0 178 128">
        <rect x="26.500" y="17.500" width="128" height="62" fill="#efefef" stroke="#a3a3a3" />
        {miniBig.map(([x, y]) => <rect key={`${x}-${y}`} x={x + 0.5} y={y + 0.5} width="18" height="9" fill="#c4c4c4" stroke="#b4b4b4" />)}
        {miniSmall.map(([x, y]) => <rect key={`${x}-${y}`} x={x + 0.5} y={y + 0.5} width="8" height="8" fill="#c4c4c4" stroke="#b4b4b4" />)}
        <rect x="150.500" y="75.500" width="8" height="8" fill="none" stroke="#a3a3a3" />
      </svg>
    </MiniMap>
  </Canvas>
);

export default function App() {
  return (
    <Shell>
      <Global />
      <TitleBar>
        <QuickTools>
          <TitleButton $w={28} aria-label="Save">
            <Ico><path d="M2 2H14V14H2ZM2 8H14" stroke="#fff" strokeWidth="2" /><path d="M5 10H11V14H5Z" fill="#fff" /><path d="M6 11H8V14H6Z" fill={BLUE} /></Ico>
          </TitleButton>
          <TitleButton $w={28} aria-label="Open">
            <Ico><path d="M1 7V14.500H14.500V4.500H9M1 4V2H4" stroke="#fff" strokeWidth="1.500" /><path d="M1 14L4 9H11L14 14ZM4 0L8 3L4 6Z" fill="#fff" /></Ico>
          </TitleButton>
          <TitleButton $w={28} aria-label="Undo">
            <Ico><path d="M6 1L2 5.500L6 10M2 5.500H9A4.500 4 0 0 1 9 14H8" stroke="#fff" strokeWidth="2" /></Ico>
          </TitleButton>
          <TitleButton $w={28} aria-label="Redo">
            <Ico><path d="M10 1L14 5.500L10 10M14 5.500H7A4.500 4 0 0 0 7 14H8" stroke="#5274ab" strokeWidth="2" /></Ico>
          </TitleButton>
        </QuickTools>
        <span>ADAS Software Development - Next Design</span>
        <WindowTools>
          <TitleButton $w={44} aria-label="Minimize"><Ico w={10}><path d="M0 5.500H10" stroke="#fff" /></Ico></TitleButton>
          <TitleButton $w={44} aria-label="Maximize"><Ico w={10}><path d="M.5.5H9.500V9.500H.5Z" stroke="#fff" /></Ico></TitleButton>
          <TitleButton $w={44} aria-label="Close"><Ico w={10}><path d="M0 0L10 10M10 0L0 10" stroke="#fff" /></Ico></TitleButton>
        </WindowTools>
      </TitleBar>

      <TabRow>
        {menuTabs.map((t) => <MenuTab key={t} href="#" $active={t === "Product Line"}>{t}</MenuTab>)}
        <TabActions>
          <SquareButton aria-label="Feedback">
            <Ico w={14}><path d="M2.500 1.500H11.500L12.500 2.500V8.500L11.500 9.500H8L5 12.500V9.500H2.500L1.500 8.500V2.500Z" stroke="#444" /></Ico>
          </SquareButton>
          <SquareButton aria-label="Show less"><Chevron up w={10} c={BLUE} /></SquareButton>
        </TabActions>
      </TabRow>

      <RibbonBar />

      <Main>
        <Side>
          <TopPane>
            <PaneTools>
              <HierTool /><Factory c="#cddbe7" dot="#cddbe7" /><CopyTool /><ShareTool />
            </PaneTools>
            <TreeList rows={modelRows} />
            <Search />
          </TopPane>
          <BottomPane>
            <PaneTools><CaseTool /><FBadge /></PaneTools>
            <TreeList rows={featureRows} inset />
            <Search />
          </BottomPane>
        </Side>

        <Editor>
          <DocTabs>
            <DocTab $active><UseCaseIcon />UseCases</DocTab>
            <DocTab><TraceIcon />Trace</DocTab>
            <DocMenu aria-label="Open documents"><Chevron /></DocMenu>
          </DocTabs>
          <PathRow>
            <ModelChip>M</ModelChip>
            <NavButton aria-label="Back"><NavArrow back /></NavButton>
            <NavButton aria-label="Forward"><NavArrow /></NavButton>
            <Crumbs>
              <li><Crumb /><a href="#">ADAS Software Development</a></li>
              <li><Crumb /><a href="#">System Requirements</a></li>
              <li><Crumb /><a href="#">UseCases</a></li>
              <li><Crumb /></li>
            </Crumbs>
            <More aria-label="More">»</More>
            <ViewTab $active>UsecaseDiagram</ViewTab>
            <ViewTab>List</ViewTab>
            <ViewTab>Details</ViewTab>
          </PathRow>
          <Diagram />
        </Editor>
      </Main>

      <StatusBar>
        <StatusButton $on aria-label="Left pane layout"><LayoutIcon part="left" /></StatusButton>
        <StatusButton aria-label="Bottom pane layout"><LayoutIcon part="bottom" /></StatusButton>
        <StatusButton aria-label="Right pane layout"><LayoutIcon part="right" /></StatusButton>
        <StatusButton aria-label="Properties"><PropertyIcon grey /></StatusButton>
        <StatusButton aria-label="View settings"><SettingsPane /></StatusButton>
        <ZoomValue>100%</ZoomValue>
        <StatusButton aria-label="Zoom out"><Ico w={10}><path d="M0 5.500H10" stroke="#555" /></Ico></StatusButton>
        <ZoomRange type="range" aria-label="Zoom" min={0} max={400} defaultValue={100} />
        <StatusButton $w={26} aria-label="Zoom in"><Ico w={10}><path d="M0 5.500H10M5.500 0V10" stroke="#555" /></Ico></StatusButton>
        <StatusButton $w={42} aria-label="Fit"><FitIcon /></StatusButton>
        <StatusButton $w={34} aria-label="Notifications"><BellIcon /></StatusButton>
        <GripCell><GripIcon /></GripCell>
      </StatusBar>

      <PopupMenu x={276} y={507} w={349} entries={contextEntries} />
      <PopupMenu x={617} y={664} w={206} entries={relatedEntries} />
      <Tip role="tooltip">System Requirements/UseCases/Brakes ECU</Tip>
      <Pointer width="13" height="20" viewBox="0 0 13 20" aria-hidden="true">
        <path d="M.5.5V15.500L4 12L6.500 18L9 17L6.500 11.500H11.500Z" fill="#fff" stroke="#000" />
      </Pointer>
    </Shell>
  );
}
